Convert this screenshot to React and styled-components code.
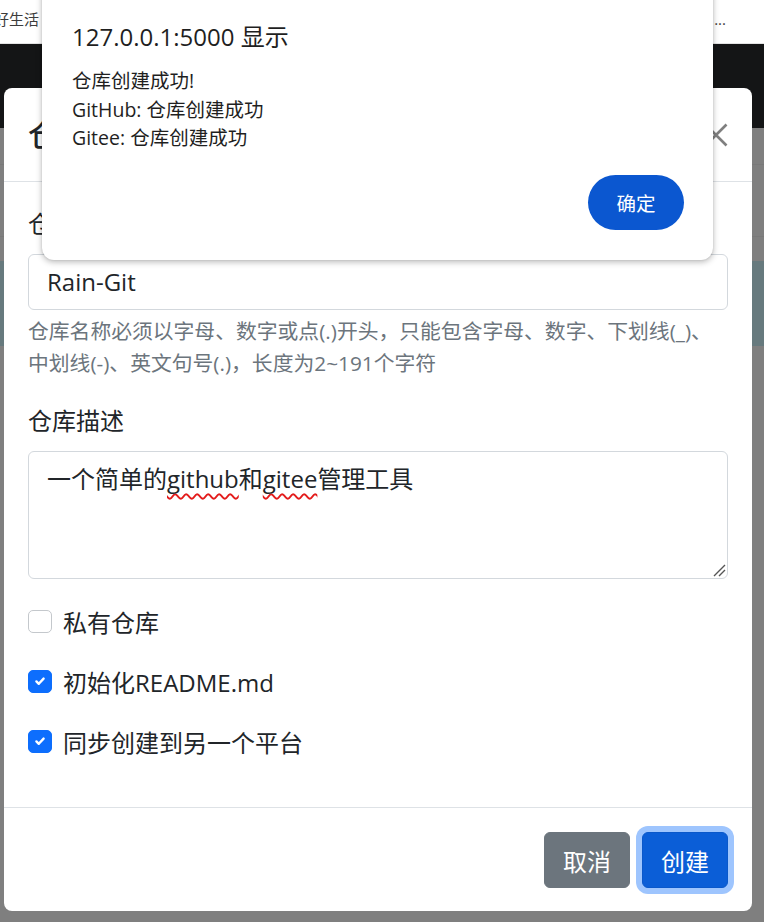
import styled, { createGlobalStyle } from "styled-components";

const GlobalStyle = createGlobalStyle`
  html, body {
    margin: 0;
    padding: 0;
    overflow: hidden;
    background: #ffffff;
  }
  body {
    font-family: "Open Sans", "Noto Sans CJK SC", sans-serif;
    color: #212529;
  }
  * {
    box-sizing: border-box;
  }
`;

const Screen = styled.div`
  position: relative;
  width: 764px;
  height: 922px;
  display: flex;
  flex-direction: column;
  overflow: hidden;
`;

const BookmarkBar = styled.div`
  height: 44px;
  flex: none;
  display: flex;
  align-items: center;
  justify-content: space-between;
  padding: 0 38px 6px 0;
  background: #ffffff;
  border-bottom: 1px solid #e3e3e3;
  font-size: 15px;
  color: #3c3c3c;
`;

const BookmarkText = styled.span`
  margin-left: ${({ $cut }) => ($cut ? -6 : 0)}px;
  white-space: nowrap;
`;

const Viewport = styled.div`
  position: relative;
  flex: 1;
  overflow: hidden;
`;

const Navbar = styled.div`
  height: 84px;
  background: #282a2c;
`;

const PageSection = styled.div`
  height: ${({ $h }) => $h}px;
  background: #ffffff;
  border-bottom: ${({ $line }) => ($line ? "1px solid #f2f2f2" : "none")};
`;

const InfoAlert = styled.div`
  height: 85px;
  background: #cff4fc;
`;

const Backdrop = styled.div`
  position: absolute;
  inset: 0;
  background: rgba(0, 0, 0, 0.5);
`;

const ModalDialog = styled.div`
  position: absolute;
  top: 44px;
  left: 4px;
  width: 748px;
  background: #ffffff;
  border-radius: 8px;
  display: flex;
  flex-direction: column;
`;

const ModalHeader = styled.div`
  display: flex;
  align-items: center;
  justify-content: space-between;
  padding: 24px 24px 24px;
  border-bottom: 1px solid #dee2e6;
`;

const ModalTitle = styled.h5`
  margin: 0;
  font-size: 30px;
  font-weight: 500;
  line-height: 45px;
`;

const CloseButton = styled.button`
  width: 24px;
  height: 24px;
  padding: 0;
  border: none;
  background: transparent;
  display: flex;
  align-items: center;
  justify-content: center;
`;

const ModalBody = styled.div`
  padding: 24px;
`;

const Label = styled.div`
  font-size: 24px;
  line-height: 36px;
  margin-bottom: 12px;
`;

const TextInput = styled.div`
  height: 56px;
  border: 1px solid #d3d8dd;
  border-radius: 6px;
  padding: 9px 18px;
  font-size: 24px;
  line-height: 36px;
`;

const HelpText = styled.div`
  margin-top: 6px;
  margin-bottom: 24px;
  font-size: 20.8px;
  line-height: 31.5px;
  color: #6c757d;
`;

const HelpLine = styled.span`
  display: block;
  white-space: nowrap;
`;

const TextArea = styled.div`
  position: relative;
  height: 128px;
  border: 1px solid #d3d8dd;
  border-radius: 6px;
  padding: 9px 18px;
  font-size: 24px;
  line-height: 36px;
  margin-bottom: 24px;
`;

const Misspelled = styled.span`
  text-decoration: underline wavy #e31b1b;
  text-decoration-thickness: 1.5px;
  text-underline-offset: 5px;
  text-decoration-skip-ink: none;
`;

const ResizeGrip = styled.svg`
  position: absolute;
  right: 1px;
  bottom: 1px;
`;

const CheckRow = styled.label`
  display: flex;
  align-items: center;
  gap: 11px;
  height: 36px;
  font-size: 24px;
  margin-bottom: 24px;
`;

const CheckBox = styled.span`
  width: 24px;
  height: 23px;
  flex: none;
  border-radius: 5px;
  border: 1px solid ${({ $checked }) => ($checked ? "#0d6efd" : "#c4c8cc")};
  background: ${({ $checked }) => ($checked ? "#0d6efd" : "#ffffff")};
  display: flex;
  align-items: center;
  justify-content: center;
`;

const ModalFooter = styled.div`
  display: flex;
  justify-content: flex-end;
  align-items: center;
  gap: 12px;
  padding: 24px 24px 23px;
  border-top: 1px solid #dee2e6;
`;

const Button = styled.button`
  height: 56px;
  padding: 0 18px;
  border-radius: 6px;
  font-family: "Open Sans", "Noto Sans CJK SC", sans-serif;
  font-size: 24px;
  color: #ffffff;
  border: 1px solid ${({ $primary }) => ($primary ? "#0a58ca" : "#6c757d")};
  background: ${({ $primary }) => ($primary ? "#0b5ed7" : "#6c757d")};
  box-shadow: ${({ $primary }) => ($primary ? "0 0 0 6px #9ec5fe" : "none")};
`;

const AlertDialog = styled.div`
  position: absolute;
  top: -20px;
  left: 42px;
  width: 671px;
  background: #ffffff;
  border-radius: 12px;
  box-shadow: 0 2px 6px rgba(0, 0, 0, 0.28), 0 0 2px rgba(0, 0, 0, 0.12);
  padding: 41px 29px 30px 30px;
  display: flex;
  flex-direction: column;
  color: #1f1f1f;
`;

const AlertTitle = styled.div`
  font-size: 24px;
  line-height: 32px;
`;

const AlertMessage = styled.div`
  margin-top: 14px;
  font-size: 19.5px;
  line-height: 28.5px;
`;

const AlertLine = styled.div`
  white-space: nowrap;
`;

const AlertActions = styled.div`
  display: flex;
  justify-content: flex-end;
  margin-top: 22px;
`;

const OkButton = styled.button`
  width: 96px;
  height: 55px;
  border: none;
  border-radius: 28px;
  background: #0b57d0;
  color: #ffffff;
  font-family: "Open Sans", "Noto Sans CJK SC", sans-serif;
  font-size: 19.5px;
`;

const Check = () => (
  <svg width="16" height="16" viewBox="0 0 20 20">
    <path
      d="m5.5 10.5 3 3 6-6.5"
      fill="none"
      stroke="#fff"
      strokeWidth="3"
      strokeLinecap="round"
      strokeLinejoin="round"
    />
  </svg>
);

const options = [
  { label: "私有仓库", checked: false },
  { label: "初始化README.md", checked: true },
  { label: "同步创建到另一个平台", checked: true },
];

const messages = ["仓库创建成功!", "GitHub: 仓库创建成功", "Gitee: 仓库创建成功"];

export default function App() {
  return (
    <>
      <GlobalStyle />
      <Screen>
        <BookmarkBar>
          <BookmarkText $cut>好生活</BookmarkText>
          <BookmarkText>...</BookmarkText>
        </BookmarkBar>
        <Viewport>
          <Navbar />
          <PageSection $h={37} $line />
          <PageSection $h={72} $line />
          <PageSection $h={24} />
          <InfoAlert />
          <PageSection $h={600} />
          <Backdrop />
          <ModalDialog>
            <ModalHeader>
              <ModalTitle>仓库创建</ModalTitle>
              <CloseButton>
                <svg width="24" height="24" viewBox="0 0 24 24">
                  <path
                    d="M1.5 1.5 22.5 22.5M22.5 1.5 1.5 22.5"
                    stroke="#7f7f7f"
                    strokeWidth="2.6"
                    fill="none"
                  />
                </svg>
              </CloseButton>
            </ModalHeader>
            <ModalBody>
              <Label>仓库名称</Label>
              <TextInput>Rain-Git</TextInput>
              <HelpText>
                <HelpLine>
                  仓库名称必须以字母、数字或点(.)开头，只能包含字母、数字、下划线(_)、
                </HelpLine>
                <HelpLine>中划线(-)、英文句号(.)，长度为2~191个字符</HelpLine>
              </HelpText>
              <Label>仓库描述</Label>
              <TextArea>
                一个简单的<Misspelled>github</Misspelled>和
                <Misspelled>gitee</Misspelled>管理工具
                <ResizeGrip width="14" height="14" viewBox="0 0 14 14">
                  <path
                    d="M2 13 13 2M7 13 13 7"
                    stroke="#555"
                    strokeWidth="1.4"
                    fill="none"
                  />
                </ResizeGrip>
              </TextArea>
              {options.map((opt) => (
                <CheckRow key={opt.label}>
                  <CheckBox $checked={opt.checked}>
                    {opt.checked && <Check />}
                  </CheckBox>
                  {opt.label}
                </CheckRow>
              ))}
            </ModalBody>
            <ModalFooter>
              <Button>取消</Button>
              <Button $primary>创建</Button>
            </ModalFooter>
          </ModalDialog>
        </Viewport>
        <AlertDialog>
          <AlertTitle>127.0.0.1:5000 显示</AlertTitle>
          <AlertMessage>
            {messages.map((m) => (
              <AlertLine key={m}>{m}</AlertLine>
            ))}
          </AlertMessage>
          <AlertActions>
            <OkButton>确定</OkButton>
          </AlertActions>
        </AlertDialog>
      </Screen>
    </>
  );
}
